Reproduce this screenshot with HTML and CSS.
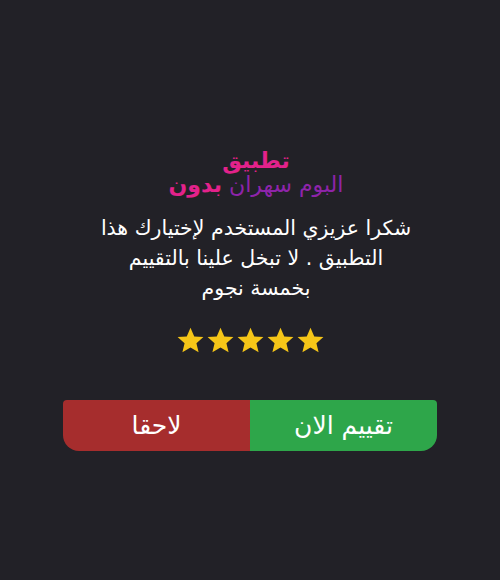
FILE: index.html
```html
<!DOCTYPE html>
<html lang="ar" dir="rtl">
<head>
<meta charset="utf-8">
<link rel="stylesheet" href="styles.css">
</head>
<body>
<div class="dialog">
  <div class="title">تطبيق</div>
  <div class="subtitle"><span class="sub-purple">البوم سهران</span> <span class="sub-pink">بدون</span></div>
  <p class="message">شكرا عزيزي المستخدم لإختيارك هذا<br>التطبيق . لا تبخل علينا بالتقييم<br>بخمسة نجوم</p>
  <div class="stars">
    <svg class="star" viewBox="0 0 24 24"><path d="M12 1.5l3.1 7.1 7.6.6-5.8 5 1.8 7.5L12 17.7l-6.7 4 1.8-7.5-5.8-5 7.6-.6z"/></svg>
    <svg class="star" viewBox="0 0 24 24"><path d="M12 1.5l3.1 7.1 7.6.6-5.8 5 1.8 7.5L12 17.7l-6.7 4 1.8-7.5-5.8-5 7.6-.6z"/></svg>
    <svg class="star" viewBox="0 0 24 24"><path d="M12 1.5l3.1 7.1 7.6.6-5.8 5 1.8 7.5L12 17.7l-6.7 4 1.8-7.5-5.8-5 7.6-.6z"/></svg>
    <svg class="star" viewBox="0 0 24 24"><path d="M12 1.5l3.1 7.1 7.6.6-5.8 5 1.8 7.5L12 17.7l-6.7 4 1.8-7.5-5.8-5 7.6-.6z"/></svg>
    <svg class="star" viewBox="0 0 24 24"><path d="M12 1.5l3.1 7.1 7.6.6-5.8 5 1.8 7.5L12 17.7l-6.7 4 1.8-7.5-5.8-5 7.6-.6z"/></svg>
  </div>
  <div class="buttons">
    <div class="btn btn-rate">تقييم الان</div>
    <div class="btn btn-later">لاحقا</div>
  </div>
</div>
</body>
</html>
```
FILE: styles.css
```css
html, body {
  margin: 0;
  padding: 0;
}
body {
  background: #222127;
  width: 500px;
  height: 580px;
  font-family: "DejaVu Sans", sans-serif;
  color: #ffffff;
}
.dialog {
  display: flex;
  flex-direction: column;
  align-items: center;
  padding-top: 149px;
}
.title {
  color: #e3228b;
  font-size: 22px;
  font-weight: bold;
  line-height: 24px;
  padding-left: 12px;
}
.subtitle {
  font-size: 22px;
  line-height: 24px;
  padding-left: 12px;
}
.sub-purple {
  color: #8e24aa;
}
.sub-pink {
  color: #e3228b;
  font-weight: bold;
}
.message {
  margin: 16px 0 0;
  padding-left: 12px;
  text-align: center;
  font-size: 20.5px;
  line-height: 30px;
}
.stars {
  display: flex;
  gap: 1px;
  margin-top: 23px;
}
.star {
  width: 29px;
  height: 29px;
  fill: #f5c518;
}
.buttons {
  display: flex;
  margin-top: 45px;
  width: 374px;
  height: 51px;
}
.btn {
  flex: 1;
  display: flex;
  align-items: center;
  justify-content: center;
  font-size: 25px;
  color: #ffffff;
}
.btn-rate {
  background: #2ea64a;
  border-radius: 0 4px 16px 0;
}
.btn-later {
  background: #a62d2d;
  border-radius: 4px 0 0 16px;
}
```
